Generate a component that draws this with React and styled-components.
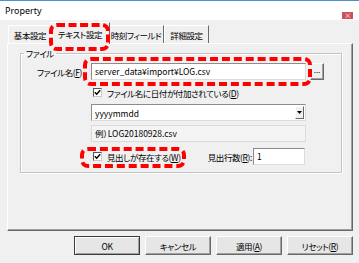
import styled, { createGlobalStyle } from "styled-components";

const GlobalStyle = createGlobalStyle`
  html, body {
    margin: 0;
    padding: 0;
    background: #f0f0f0;
  }
  body {
    font-family: "Noto Sans CJK JP", "Noto Sans", sans-serif;
    font-size: 8.5px;
    letter-spacing: -0.4px;
    font-feature-settings: "palt";
    color: #000;
  }
  * {
    box-sizing: border-box;
  }
`;

const Window = styled.div`
  width: 359px;
  height: 263px;
  background: #f0f0f0;
  border-top: 1px solid #4f8fd0;
  display: flex;
  flex-direction: column;
`;

const TitleBar = styled.div`
  height: 19px;
  background: #fff;
  display: flex;
  justify-content: space-between;
  padding: 0 6px 0 5px;
`;

const Title = styled.div`
  font-family: "Noto Sans", sans-serif;
  font-size: 9px;
  letter-spacing: 0;
  line-height: 19px;
`;

const CloseButton = styled.div`
  width: 11px;
  height: 7px;
  margin-top: 11px;
  background: #c9545a;
  color: #fff;
  font-size: 7px;
  line-height: 7px;
  text-align: center;
`;

const Body = styled.div`
  padding: 2px 6px 0 7px;
`;

const TabStrip = styled.div`
  display: flex;
  align-items: flex-end;
  height: 21px;
  padding-left: 1px;
  position: relative;
  z-index: 1;
`;

const Tab = styled.div`
  position: relative;
  z-index: ${(p) => (p.$active ? 2 : 1)};
  width: ${(p) => p.$w + (p.$active ? 4 : 0)}px;
  height: ${(p) => (p.$active ? 22 : 18)}px;
  margin: 0 ${(p) => (p.$active ? -2 : 0)}px ${(p) => (p.$active ? -1 : 0)}px;
  border: 1px solid;
  border-bottom: none;
  border-color: #fff #696969 transparent #fff;
  background: #f0f0f0;
  display: flex;
  align-items: center;
  justify-content: center;
  white-space: nowrap;
`;

const Mark = styled.div`
  position: absolute;
  top: ${(p) => p.$t}px;
  right: ${(p) => p.$r}px;
  bottom: ${(p) => p.$b}px;
  left: ${(p) => p.$l}px;
  border: 4px dashed #ff0000;
  border-radius: 8px;
  pointer-events: none;
  z-index: 5;
`;

const Panel = styled.div`
  width: 346px;
  height: 188px;
  border: 1px solid;
  border-color: #fff #696969 #696969 #fff;
  box-shadow: inset -1px -1px 0 #a0a0a0;
  padding: 4px 0 0 12px;
`;

const Group = styled.fieldset`
  margin: 0;
  padding: 0;
  width: 322px;
  height: 125px;
  border: 1px solid #c4c4c4;
  box-shadow: inset 1px 1px 0 #fff, 1px 1px 0 #fff;
`;

const Legend = styled.legend`
  margin-left: 3px;
  padding: 0 2px;
  line-height: 11px;
`;

const Row = styled.div`
  display: flex;
  align-items: center;
  width: ${(p) => (p.$w ? `${p.$w}px` : "auto")};
  height: ${(p) => p.$h || 17}px;
  margin-top: ${(p) => p.$mt}px;
  padding-left: ${(p) => p.$pl || 0}px;
`;

const FieldLabel = styled.div`
  width: 70px;
  padding-right: 9px;
  text-align: right;
  white-space: nowrap;
`;

const Anchor = styled.div`
  position: relative;
  display: flex;
  align-items: center;
  height: 100%;
`;

const TextBox = styled.div`
  width: ${(p) => p.$w}px;
  height: 17px;
  background: ${(p) => (p.$disabled ? "#f4f4f4" : "#fff")};
  border: 1px solid;
  border-color: ${(p) =>
    p.$disabled ? "#dadada" : "#8c8c8c #dcdcdc #dcdcdc #8c8c8c"};
  padding: 0 3px;
  line-height: 15px;
  letter-spacing: 0;
  white-space: nowrap;
  overflow: hidden;
  margin-left: ${(p) => p.$ml || 0}px;
`;

const SmallButton = styled.div`
  width: 14px;
  height: 17px;
  margin-left: 4px;
  border: 1px solid;
  border-color: #fff #696969 #696969 #fff;
  box-shadow: inset -1px -1px 0 #a0a0a0;
  background: #f0f0f0;
  font-size: 8px;
  letter-spacing: 0;
  line-height: 12px;
  text-align: center;
`;

const Select = styled.div`
  width: 215px;
  height: 17px;
  margin-left: 70px;
  background: #fff;
  border: 1px solid;
  border-color: #8c8c8c #dcdcdc #dcdcdc #8c8c8c;
  display: flex;
  align-items: center;
  justify-content: space-between;
  padding: 0 1px 0 3px;
  letter-spacing: 0;
`;

const DropArrow = styled.div`
  width: 9px;
  height: 13px;
  border: 1px solid;
  border-color: #fff #696969 #696969 #fff;
  background: #f0f0f0;
  display: flex;
  align-items: center;
  justify-content: center;
`;

const Check = styled.div`
  display: flex;
  align-items: center;
  white-space: nowrap;
`;

const Box = styled.span`
  width: 9px;
  height: 9px;
  margin-right: 5px;
  background: #fff;
  border: 1px solid;
  border-color: #555 #c8c8c8 #c8c8c8 #555;
  display: flex;
  align-items: center;
  justify-content: center;
`;

const InlineLabel = styled.div`
  margin-left: auto;
  margin-right: 1px;
  white-space: nowrap;
`;

const ButtonRow = styled.div`
  display: flex;
  justify-content: flex-end;
  gap: 5px;
  margin-top: 5px;
`;

const Button = styled.div`
  width: 66px;
  height: 19px;
  border: 1px solid;
  border-color: ${(p) =>
    p.$default ? "#3c3c3c" : "#fff #696969 #696969 #fff"};
  box-shadow: ${(p) =>
    p.$default
      ? "inset 1px 1px 0 #fff, inset -1px -1px 0 #a0a0a0"
      : "inset -1px -1px 0 #a0a0a0"};
  background: #e6e6e6;
  display: flex;
  align-items: center;
  justify-content: center;
  white-space: nowrap;
`;

const CheckMark = () => (
  <svg width="7" height="7" viewBox="0 0 7 7">
    <path d="M0.8 3.2 L2.7 5.2 L6.2 1.2" fill="none" stroke="#000" strokeWidth="1.4" />
  </svg>
);

const tabs = [
  { label: "基本設定", w: 44 },
  { label: "テキスト設定", w: 56, active: true },
  { label: "時刻フィールド", w: 56 },
  { label: "詳細設定", w: 45 },
];

export default function App() {
  return (
    <>
      <GlobalStyle />
      <Window>
        <TitleBar>
          <Title>Property</Title>
          <CloseButton>×</CloseButton>
        </TitleBar>
        <Body>
          <TabStrip>
            {tabs.map((t) => (
              <Tab key={t.label} $w={t.w} $active={t.active}>
                {t.label}
                {t.active && <Mark $t={0} $r={-1} $b={-7} $l={-2} />}
              </Tab>
            ))}
          </TabStrip>
          <Panel>
            <Group>
              <Legend>ファイル</Legend>
              <Row $mt={4}>
                <FieldLabel>
                  ファイル名(<u>F</u>)
                </FieldLabel>
                <Anchor>
                  <TextBox $w={215}>server_data¥import¥LOG.csv</TextBox>
                  <Mark $t={-6} $r={-6} $b={-6} $l={-8} />
                </Anchor>
                <SmallButton>...</SmallButton>
              </Row>
              <Row $mt={6} $h={13} $pl={72}>
                <Check>
                  <Box>
                    <CheckMark />
                  </Box>
                  ファイル名に日付が付加されている(<u>D</u>)
                </Check>
              </Row>
              <Row $mt={5}>
                <Select>
                  yyyymmdd
                  <DropArrow>
                    <svg width="5" height="3" viewBox="0 0 5 3">
                      <path d="M0 0 H5 L2.5 3 Z" fill="#000" />
                    </svg>
                  </DropArrow>
                </Select>
              </Row>
              <Row $mt={4}>
                <TextBox $w={215} $ml={70} $disabled>
                  例）LOG20180928.csv
                </TextBox>
              </Row>
              <Row $mt={6} $pl={72} $w={284}>
                <Anchor>
                  <Check>
                    <Box>
                      <CheckMark />
                    </Box>
                    見出しが存在する(<u>W</u>)
                  </Check>
                  <Mark $t={-1} $r={-5} $b={-3} $l={-13} />
                </Anchor>
                <InlineLabel>
                  見出行数(<u>R</u>):
                </InlineLabel>
                <TextBox $w={52}>1</TextBox>
              </Row>
            </Group>
          </Panel>
          <ButtonRow>
            <Button $default>OK</Button>
            <Button>キャンセル</Button>
            <Button>
              適用(<u>A</u>)
            </Button>
            <Button>
              リセット(<u>R</u>)
            </Button>
          </ButtonRow>
        </Body>
      </Window>
    </>
  );
}
